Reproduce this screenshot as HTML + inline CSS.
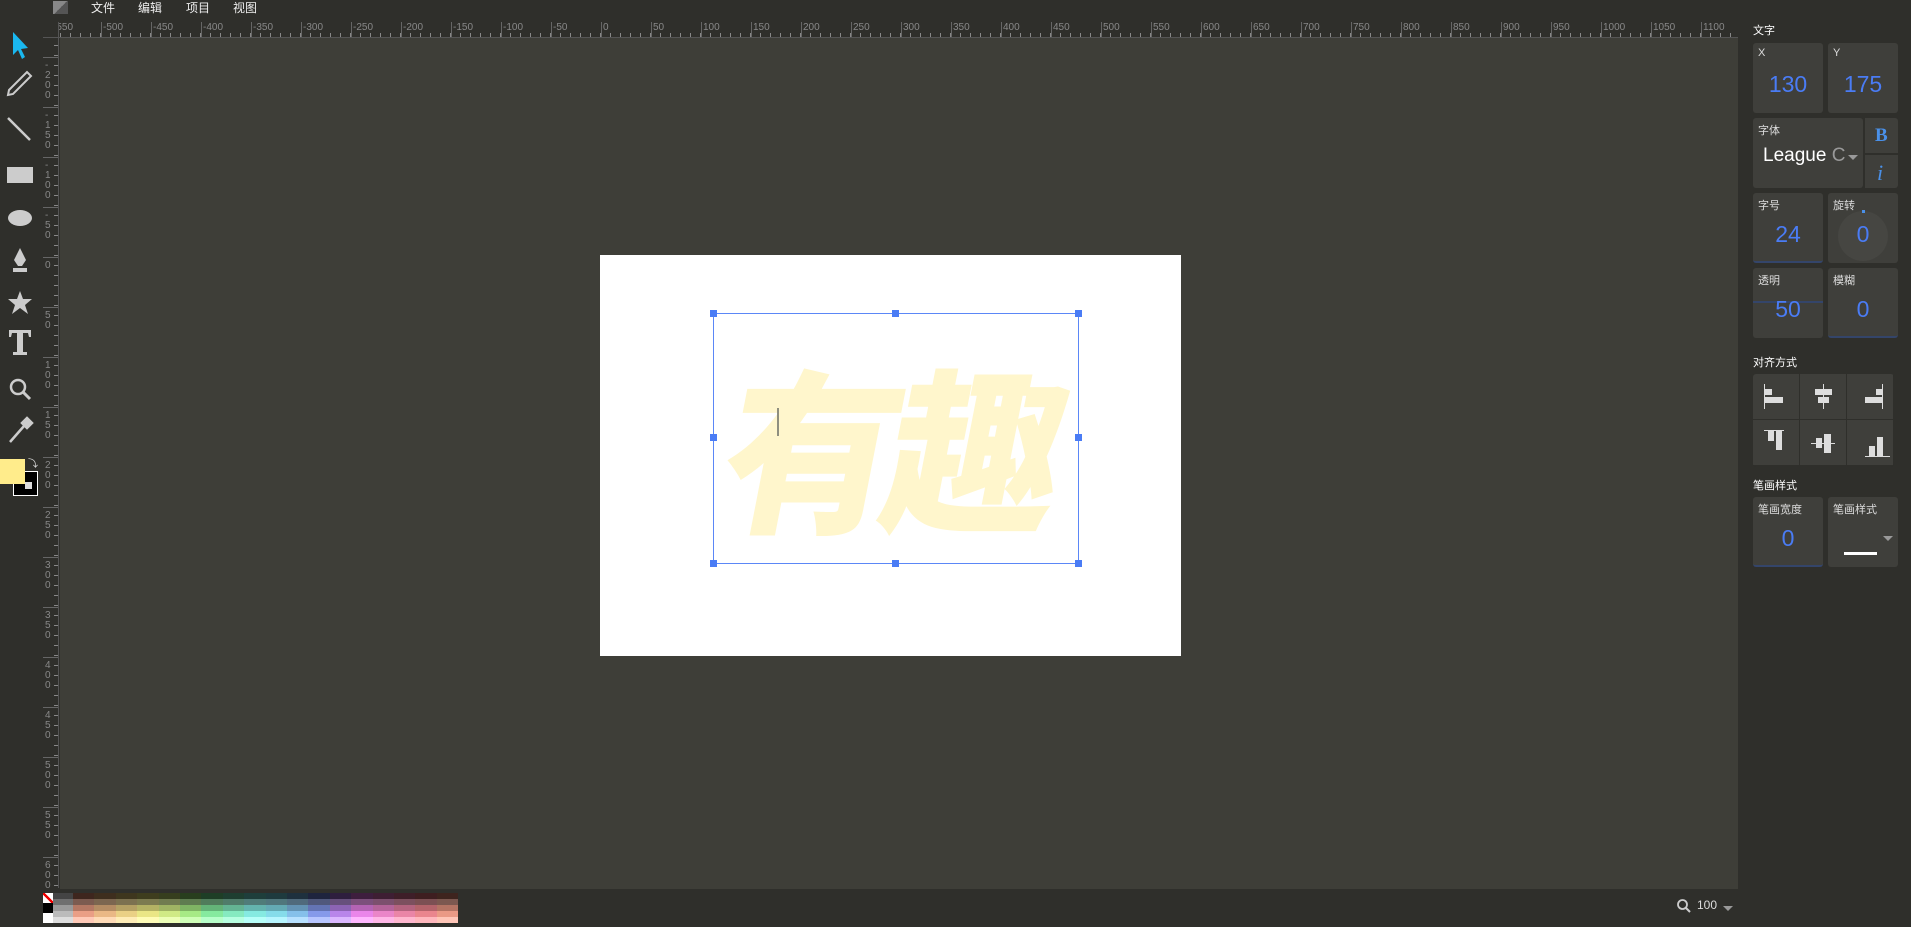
<!DOCTYPE html>
<html><head><meta charset="utf-8"><style>
*{margin:0;padding:0;box-sizing:border-box}
body{width:1911px;height:927px;background:#2f2f2b;position:relative;overflow:hidden;font-family:"Liberation Sans","Noto Sans CJK SC",sans-serif;color:#ddd}
.a{position:absolute}
.menu span{position:absolute;top:0;font-size:12px;color:#eee;line-height:16px}
.hr{left:59px;top:22px;width:1679px;height:16px;background:#2f2f2b;border-bottom:1px solid #555;
background-image:repeating-linear-gradient(90deg,#888 0 1px,transparent 1px 10px);background-size:100% 4px;background-repeat:no-repeat;background-position:1px 11px;overflow:hidden}
.hr span{position:absolute;top:0;font-size:10px;color:#888;line-height:11px;border-left:1px solid #666;padding-left:1px;height:16px}
.vr{left:43px;top:38px;width:16px;height:850px;border-right:1px solid #555;
background-image:repeating-linear-gradient(180deg,#888 0 1px,transparent 1px 10px);background-size:4px 100%;background-repeat:no-repeat;background-position:11px 7px;overflow:hidden}
.vr span{position:absolute;left:0;width:16px;font-size:10px;color:#888;line-height:10px;border-top:1px solid #666;padding-left:2px;padding-top:3px}
.box{position:absolute;background:#3f3f3b;border-radius:3px}
.lbl{position:absolute;left:5px;top:4px;font-size:11px;color:#ddd}
.val{position:absolute;left:0;right:0;top:28px;text-align:center;font-size:23px;color:#4a7cf5}
.h{position:absolute;font-size:11px;color:#fff}
.pal div{position:absolute;top:0;height:30px}
.col{width:21.4px;background:linear-gradient(hsl(var(--h),35%,18%) 0 20%,hsl(var(--h),22%,40%) 20% 40%,hsl(var(--h),35%,55%) 40% 60%,hsl(var(--h),70%,72%) 60% 80%,hsl(var(--h),100%,86%) 80%)}
.hd{position:absolute;width:7px;height:7px;background:#4a7cf5}
.ag{position:absolute;width:46px;height:45px;background:#3f3f3b}
</style></head><body>
<div class="menu">
<div class="a" style="left:53px;top:1px;width:15px;height:13px;background:linear-gradient(135deg,#888 50%,#555 50%)"></div>
<span style="left:91px">文件</span><span style="left:138px">编辑</span><span style="left:186px">项目</span><span style="left:233px">视图</span>
</div>
<div class="a" style="left:43px;top:22px;width:16px;height:16px;border-right:1px solid #555;border-bottom:1px solid #555"></div>
<div class="a hr">
<span style="left:-8px">-550</span><span style="left:42px">-500</span><span style="left:92px">-450</span><span style="left:142px">-400</span><span style="left:192px">-350</span><span style="left:242px">-300</span><span style="left:292px">-250</span><span style="left:342px">-200</span><span style="left:392px">-150</span><span style="left:442px">-100</span><span style="left:492px">-50</span><span style="left:542px">0</span><span style="left:592px">50</span><span style="left:642px">100</span><span style="left:692px">150</span><span style="left:742px">200</span><span style="left:792px">250</span><span style="left:842px">300</span><span style="left:892px">350</span><span style="left:942px">400</span><span style="left:992px">450</span><span style="left:1042px">500</span><span style="left:1092px">550</span><span style="left:1142px">600</span><span style="left:1192px">650</span><span style="left:1242px">700</span><span style="left:1292px">750</span><span style="left:1342px">800</span><span style="left:1392px">850</span><span style="left:1442px">900</span><span style="left:1492px">950</span><span style="left:1542px">1000</span><span style="left:1592px">1050</span><span style="left:1642px">1100</span>
</div>
<div class="a vr">
<span style="top:19px">-<br>2<br>0<br>0</span><span style="top:69px">-<br>1<br>5<br>0</span><span style="top:119px">-<br>1<br>0<br>0</span><span style="top:169px">-<br>5<br>0</span><span style="top:219px">0</span><span style="top:269px">5<br>0</span><span style="top:319px">1<br>0<br>0</span><span style="top:369px">1<br>5<br>0</span><span style="top:419px">2<br>0<br>0</span><span style="top:469px">2<br>5<br>0</span><span style="top:519px">3<br>0<br>0</span><span style="top:569px">3<br>5<br>0</span><span style="top:619px">4<br>0<br>0</span><span style="top:669px">4<br>5<br>0</span><span style="top:719px">5<br>0<br>0</span><span style="top:769px">5<br>5<br>0</span><span style="top:819px">6<br>0<br>0</span>
</div>
<!-- canvas area -->
<div class="a" style="left:60px;top:38px;width:1678px;height:851px;background:#3e3e38"></div>
<div class="a" style="left:600px;top:255px;width:581px;height:401px;background:#fff"></div>
<div class="a" style="left:713px;top:313px;width:366px;height:251px;border:1px solid #5b87f7"></div>
<div class="a" style="left:680px;top:333px;width:420px;height:220px;text-align:center;font-family:'Noto Sans CJK SC',sans-serif;font-weight:900;font-size:176px;line-height:220px;color:#fff6cc;transform:skewX(-11deg);letter-spacing:-14px">有趣</div>
<div class="a" style="left:777px;top:408px;width:2px;height:28px;background:#8f8f7f"></div>
<div class="hd" style="left:710px;top:310px"></div><div class="hd" style="left:892px;top:310px"></div><div class="hd" style="left:1075px;top:310px"></div>
<div class="hd" style="left:710px;top:434px"></div><div class="hd" style="left:1075px;top:434px"></div>
<div class="hd" style="left:710px;top:560px"></div><div class="hd" style="left:892px;top:560px"></div><div class="hd" style="left:1075px;top:560px"></div>
<!-- tools -->
<svg class="a" style="left:0;top:28px" width="43" height="470" viewBox="0 0 43 470">
<path d="M13 4 L13 27 L18 22 L22 31 L25 29 L21 21 L28 20 Z" fill="#1ab8f0"/>
<path d="M9 62 L27 44 L31 48 L13 66 L8 67 Z" fill="none" stroke="#ccc" stroke-width="2"/>
<path d="M8 90 L30 112" stroke="#ccc" stroke-width="2.5"/>
<rect x="7" y="139" width="26" height="16" fill="#ccc"/>
<ellipse cx="20" cy="190" rx="12" ry="8" fill="#ccc"/>
<path d="M20 220 L26 232 L22 238 L18 238 L14 232 Z M13 240 h14 v4 h-14z" fill="#ccc"/>
<path d="M20 263 L23 271 L32 271 L25 277 L28 286 L20 280 L12 286 L15 277 L8 271 L17 271Z" fill="#ccc"/>
<path d="M9 302 H31 V309 H29 L28 305 H23 V324 H27 V327 H13 V324 H17 V305 H12 L11 309 H9Z" fill="#ccc"/>
<circle cx="18" cy="359" r="7" fill="none" stroke="#ccc" stroke-width="2.5"/><path d="M23 364 L30 371" stroke="#ccc" stroke-width="3"/>
<path d="M10 414 L24 398 M27 390 L32 395 L27 400 L22 395Z" stroke="#ccc" stroke-width="2.5" fill="#ccc"/>
</svg>
<div class="a" style="left:13px;top:471px;width:25px;height:25px;background:#000;border:1px solid #fff"></div>
<div class="a" style="left:25px;top:482px;width:7px;height:7px;background:#ddd"></div>
<div class="a" style="left:0;top:459px;width:25px;height:25px;background:#ffec8b"></div>
<div class="a" style="left:28px;top:455px;font-size:10px;color:#ddd">⤵</div>
<!-- palette -->
<div class="a pal" style="left:43px;top:893px;width:415px;height:30px">
<div style="left:0;width:10px;background:linear-gradient(#fff 0 33%,#000 33% 66%,#fff 66%)"></div>
<div style="left:0;top:0;width:10px;height:10px;background:linear-gradient(45deg,transparent 42%,#e00 42% 58%,transparent 58%)"></div>
<div style="left:10px;width:20px;background:linear-gradient(#444 0 20%,#6f6f6f 20% 40%,#9a9a9a 40% 60%,#bbb 60% 80%,#ddd 80%)"></div>
<div class="col" style="left:30px;--h:15"></div><div class="col" style="left:51.4px;--h:30"></div><div class="col" style="left:72.8px;--h:45"></div><div class="col" style="left:94.2px;--h:58"></div><div class="col" style="left:115.6px;--h:75"></div><div class="col" style="left:137px;--h:100"></div><div class="col" style="left:158.4px;--h:135"></div><div class="col" style="left:179.8px;--h:155"></div><div class="col" style="left:201.2px;--h:175"></div><div class="col" style="left:222.6px;--h:188"></div><div class="col" style="left:244px;--h:205"></div><div class="col" style="left:265.4px;--h:228"></div><div class="col" style="left:286.8px;--h:270"></div><div class="col" style="left:308.2px;--h:300"></div><div class="col" style="left:329.6px;--h:320"></div><div class="col" style="left:351px;--h:340"></div><div class="col" style="left:372.4px;--h:355"></div><div class="col" style="left:393.8px;width:21.2px;--h:12"></div>
</div>
<!-- zoom -->
<svg class="a" style="left:1676px;top:898px" width="16" height="16"><circle cx="6.5" cy="6.5" r="4.5" fill="none" stroke="#ccc" stroke-width="1.8"/><path d="M10 10 L14 14" stroke="#ccc" stroke-width="2"/></svg>
<div class="a" style="left:1697px;top:898px;font-size:12px;color:#ddd">100</div>
<div class="a" style="left:1723px;top:906px;border:5px solid transparent;border-top:5px solid #999"></div>
<!-- right panel -->
<div class="h" style="left:1753px;top:22px">文字</div>
<div class="box" style="left:1753px;top:43px;width:70px;height:70px"><div class="lbl">X</div><div class="val">130</div></div>
<div class="box" style="left:1828px;top:43px;width:70px;height:70px"><div class="lbl">Y</div><div class="val">175</div></div>
<div class="box" style="left:1753px;top:118px;width:110px;height:70px"><div class="lbl">字体</div><div class="a" style="left:10px;top:27px;font-size:19px;color:#fff">League <span style="color:#999">C</span></div><div class="a" style="left:95px;top:37px;border:5px solid transparent;border-top:5px solid #999"></div></div>
<div class="box" style="left:1865px;top:118px;width:33px;height:35px;border-radius:0 3px 0 0"><div class="a" style="left:10px;top:7px;font-family:'Liberation Serif',serif;font-weight:bold;font-size:19px;color:#4a90e8">B</div></div>
<div class="box" style="left:1865px;top:155px;width:33px;height:33px;border-radius:0 0 3px 0"><div class="a" style="left:12px;top:5px;font-family:'Liberation Serif',serif;font-style:italic;font-size:22px;color:#4a90e8">i</div></div>
<div class="box" style="left:1753px;top:193px;width:70px;height:70px;border-bottom:2px solid #34456a"><div class="lbl">字号</div><div class="val">24</div></div>
<div class="box" style="left:1828px;top:193px;width:70px;height:70px"><div class="lbl">旋转</div><div class="a" style="left:10px;top:18px;width:50px;height:50px;border-radius:50%;background:#464642"></div><div class="a" style="left:34px;top:17px;width:3px;height:3px;background:#4a90e8"></div><div class="val">0</div></div>
<div class="box" style="left:1753px;top:268px;width:70px;height:70px"><div class="a" style="left:0;top:33px;width:70px;height:2px;background:#34456a"></div><div class="lbl">透明</div><div class="val">50</div></div>
<div class="box" style="left:1828px;top:268px;width:70px;height:70px;border-bottom:2px solid #34456a"><div class="lbl">模糊</div><div class="val">0</div></div>
<div class="h" style="left:1753px;top:354px">对齐方式</div>
<div class="a" style="left:1753px;top:374px;width:141px;height:93px;background:#2f2f2b;border-radius:3px;overflow:hidden">
<div class="ag" style="left:0;top:0"></div><div class="ag" style="left:47px;top:0"></div><div class="ag" style="left:94px;top:0"></div>
<div class="ag" style="left:0;top:46px"></div><div class="ag" style="left:47px;top:46px"></div><div class="ag" style="left:94px;top:46px"></div>
<svg class="a" style="left:0;top:0" width="141" height="93" fill="#ddd">
<rect x="11" y="10" width="1" height="25"/><rect x="12" y="15" width="7" height="6"/><rect x="12" y="23" width="18" height="6"/>
<rect x="70" y="10" width="1" height="25"/><rect x="62" y="15" width="17" height="6"/><rect x="65" y="23" width="11" height="6"/>
<rect x="129" y="10" width="1" height="25"/><rect x="123" y="15" width="6" height="6"/><rect x="112" y="23" width="17" height="6"/>
<rect x="11" y="56" width="20" height="1"/><rect x="15" y="57" width="6" height="10"/><rect x="23" y="57" width="6" height="19"/>
<rect x="58" y="69" width="24" height="1"/><rect x="63" y="64" width="6" height="10"/><rect x="71" y="60" width="7" height="19"/>
<rect x="112" y="82" width="25" height="1"/><rect x="116" y="72" width="6" height="10"/><rect x="124" y="63" width="6" height="19"/>
</svg></div>
<div class="h" style="left:1753px;top:477px">笔画样式</div>
<div class="box" style="left:1753px;top:497px;width:70px;height:70px;border-bottom:2px solid #34456a"><div class="lbl">笔画宽度</div><div class="val">0</div></div>
<div class="box" style="left:1828px;top:497px;width:70px;height:70px"><div class="lbl">笔画样式</div><div class="a" style="left:55px;top:39px;border:5px solid transparent;border-top:5px solid #999"></div><div class="a" style="left:16px;top:55px;width:33px;height:3px;background:#fff"></div></div>
</body></html>
